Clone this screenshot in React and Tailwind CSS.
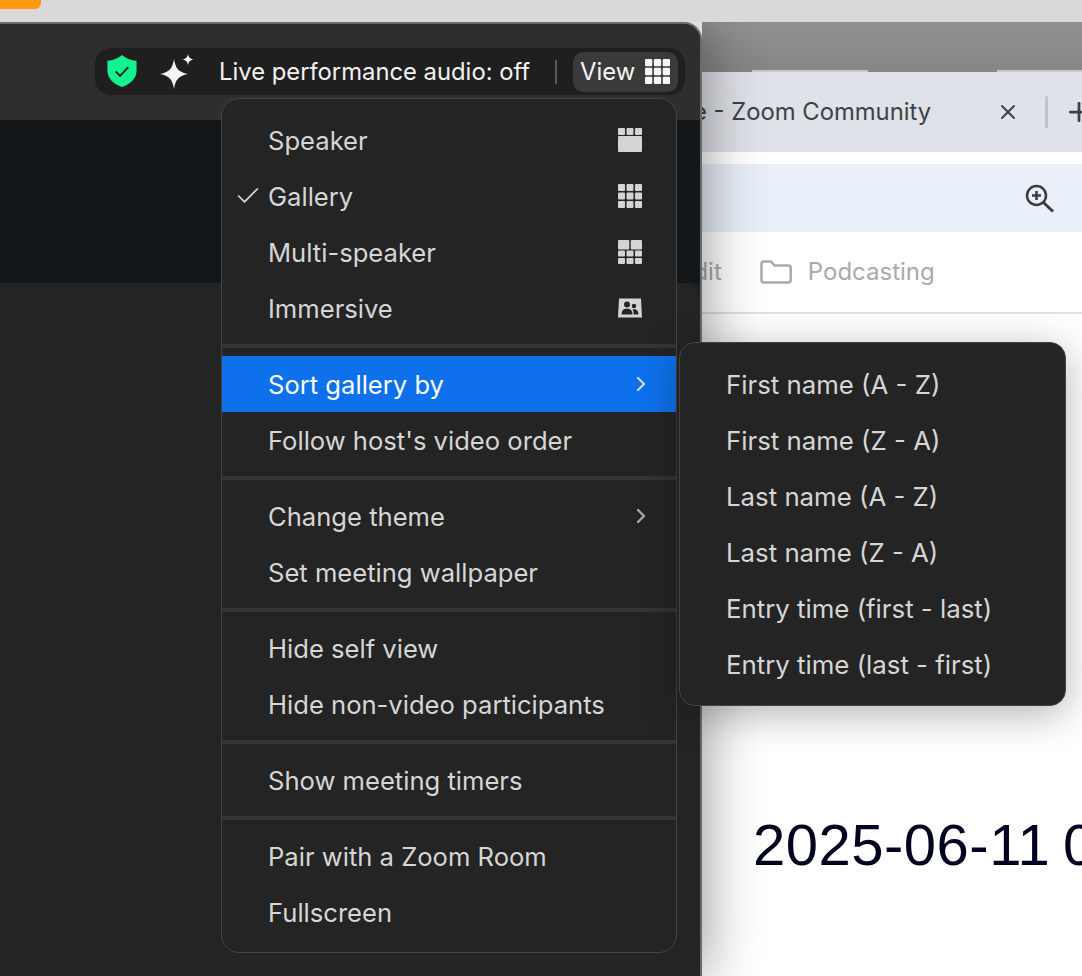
import { Check, ChevronRight, X, Plus } from 'lucide-react';

const GROUPS = [
  [
    { label: 'Speaker', icon: 'speaker' },
    { label: 'Gallery', icon: 'gallery', checked: true },
    { label: 'Multi-speaker', icon: 'multi' },
    { label: 'Immersive', icon: 'immersive' },
  ],
  [
    { label: 'Sort gallery by', more: true, active: true },
    { label: "Follow host's video order" },
  ],
  [{ label: 'Change theme', more: true }, { label: 'Set meeting wallpaper' }],
  [{ label: 'Hide self view' }, { label: 'Hide non-video participants' }],
  [{ label: 'Show meeting timers' }],
  [{ label: 'Pair with a Zoom Room' }, { label: 'Fullscreen' }],
];

const SORT_OPTIONS = [
  'First name (A - Z)',
  'First name (Z - A)',
  'Last name (A - Z)',
  'Last name (Z - A)',
  'Entry time (first - last)',
  'Entry time (last - first)',
];

function GridIcon({ className = 'w-[24px] h-[24px]', fill = '#d4d4d4' }) {
  const cells = [0, 8.5, 17];
  return (
    <svg viewBox="0 0 24 24" className={className}>
      {cells.map((y) =>
        cells.map((x) => <rect key={`${x}-${y}`} x={x} y={y} width="7" height="7" rx="1" fill={fill} />)
      )}
    </svg>
  );
}

function SpeakerIcon() {
  return (
    <svg viewBox="0 0 24 24" className="w-[24px] h-[24px]">
      <rect x="0" y="0" width="7" height="7" rx="1" fill="#d4d4d4" />
      <rect x="8.5" y="0" width="7" height="7" rx="1" fill="#d4d4d4" />
      <rect x="17" y="0" width="7" height="7" rx="1" fill="#d4d4d4" />
      <rect x="0" y="8" width="24" height="16" rx="1" fill="#d4d4d4" />
    </svg>
  );
}

function MultiIcon() {
  return (
    <svg viewBox="0 0 24 24" className="w-[24px] h-[24px]">
      <rect x="0" y="0" width="11.3" height="9.5" rx="1" fill="#d4d4d4" />
      <rect x="12.7" y="0" width="11.3" height="9.5" rx="1" fill="#d4d4d4" />
      {[0, 8.5, 17].map((x) => (
        <rect key={x} x={x} y="10.5" width="7" height="6" rx="1" fill="#d4d4d4" />
      ))}
      {[0, 8.5, 17].map((x) => (
        <rect key={x} x={x} y="18" width="7" height="6" rx="1" fill="#d4d4d4" />
      ))}
    </svg>
  );
}

function ImmersiveIcon() {
  return (
    <svg viewBox="0 0 24 20" className="w-[24px] h-[20px]">
      <path d="M1 0.5 L23 0.5 L24 19.5 L0 19.5 Z" fill="#d4d4d4" />
      <circle cx="9" cy="6.5" r="3" fill="#242424" />
      <circle cx="16" cy="8" r="2.2" fill="#242424" />
      <path d="M3.5 16.5 C3.5 12 6 10.8 9 10.8 C12 10.8 14.5 12 14.5 16.5 Z" fill="#242424" />
      <path d="M15.6 16.5 C15.6 14 15.3 12.6 14.6 11.6 C17.6 10.6 20.5 12 20.5 16.5 Z" fill="#242424" />
    </svg>
  );
}

const ICONS = {
  speaker: <SpeakerIcon />,
  gallery: <GridIcon />,
  multi: <MultiIcon />,
  immersive: <ImmersiveIcon />,
};

function MenuRow({ item }) {
  return (
    <div
      className={`relative flex items-center h-[56px] pl-[46px] pr-[34px] justify-between ${
        item.active ? 'bg-[#0e71eb] text-white' : 'text-[#d6d6d6]'
      }`}
    >
      {item.checked && (
        <Check size={28} strokeWidth={1.5} className="absolute left-[12px] top-[14px] text-[#d6d6d6]" />
      )}
      <span className="pt-[2px]">{item.label}</span>
      {item.icon && ICONS[item.icon]}
      {item.more && (
        <ChevronRight
          size={24}
          strokeWidth={2.4}
          className={`-mr-[11px] ${item.active ? 'text-[#c9d6ee]' : 'text-[#a8a8a8]'}`}
        />
      )}
    </div>
  );
}

function ViewMenu() {
  return (
    <div className="absolute left-[221px] top-[98px] z-30 w-[456px] h-[855px] py-[13px] rounded-[18px] bg-[#242424] border border-[#444444] text-[25.6px] leading-none">
      {GROUPS.map((group, i) => (
        <div key={i}>
          {i > 0 && <div className="h-[4px] my-[8px] bg-[#343434]" />}
          {group.map((item) => (
            <MenuRow key={item.label} item={item} />
          ))}
        </div>
      ))}
    </div>
  );
}

function SortMenu() {
  return (
    <div className="absolute left-[679px] top-[342px] z-40 w-[387px] h-[364px] py-[14px] rounded-[16px] bg-[#242424] border border-[#444444] text-[25.8px] leading-none shadow-[0_8px_40px_rgba(0,0,0,0.3)]">
      {SORT_OPTIONS.map((option) => (
        <div key={option} className="flex items-center h-[56px] pl-[46px] text-[#d6d6d6]">
          {option}
        </div>
      ))}
    </div>
  );
}

function StatusPill() {
  return (
    <div className="flex items-center h-[47px] w-[590px] rounded-[16px] bg-[#1f1f1f] pl-[12px] pr-[7px]">
      <svg viewBox="0 0 30 34" className="w-[30px] h-[33px] shrink-0">
        <path d="M15 0 C19 3.5 24 5.5 30 6 L30 16 C30 24 24 30 15 33 C6 30 0 24 0 16 L0 6 C6 5.5 11 3.5 15 0 Z" fill="#12f28f" />
        <path d="M8.5 17 L13 21.5 L21.5 12.5" fill="none" stroke="#1d2a26" strokeWidth="2" />
      </svg>
      <svg viewBox="0 0 36 36" className="w-[36px] h-[36px] ml-[23px] shrink-0">
        <path d="M14 5 C15.5 14 18 18 28 20 C18 22 15.500 26 14 35 C12.500 26 10 22 0 20 C10 18 12.500 14 14 5 Z" fill="#f5f5f5" />
        <path d="M28 0 C28.800 3.500 30 4.700 33.500 5.500 C30 6.300 28.800 7.500 28 11 C27.200 7.500 26 6.300 22.500 5.500 C26 4.700 27.200 3.500 28 0 Z" fill="#f5f5f5" />
      </svg>
      <span className="ml-[23px] text-[23.8px] leading-none text-[#f2f2f2] whitespace-nowrap">Live performance audio: off</span>
      <div className="ml-auto w-[2px] h-[24px] bg-[#5a5a5a]" />
      <div className="ml-[16px] flex items-center h-[40px] w-[105px] rounded-[10px] bg-[#3a3a3a] pl-[7px] pr-[8px] justify-between text-[23.8px] leading-none text-[#f5f5f5]">
        <span>View</span>
        <GridIcon className="w-[25px] h-[25px]" fill="#f5f5f5" />
      </div>
    </div>
  );
}

function ZoomWindow() {
  return (
    <div className="relative z-10 w-[702px] h-[954px] flex flex-col rounded-tr-[18px] overflow-hidden bg-[#242424] border-r-2 border-t-2 border-[#6a6a6a] shadow-[0_0_60px_rgba(0,0,0,0.45)]">
      <div className="h-[96px] shrink-0 bg-[#2e2e2e] flex justify-end items-start pt-[24px] pr-[15px]">
        <StatusPill />
      </div>
      <div className="h-[163px] shrink-0 bg-[#14171a]" />
      <div className="flex-1 bg-[#1f1f1f]">
        <div className="h-full rounded-tr-[18px] bg-[#242424]" />
      </div>
    </div>
  );
}

function BrowserWindow() {
  return (
    <div className="flex-1 min-w-0 h-[954px] flex flex-col overflow-hidden bg-white [font-family:Inter,sans-serif]">
      <div className="relative h-[50px] shrink-0 bg-gradient-to-b from-[#919191] to-[#858585]">
        <div className="absolute left-[50px] bottom-0 w-[116px] h-[2px] bg-[#c8c8c8]" />
        <div className="absolute left-[295px] bottom-0 w-[90px] h-[2px] bg-[#c8c8c8]" />
      </div>
      <div className="relative h-[80px] shrink-0 bg-[#dfe2e8] flex items-center text-[23.8px] text-[#3e4145] whitespace-nowrap">
        <span className="-ml-[9px]">e - Zoom Community</span>
        <X size={24} strokeWidth={2} className="ml-[65px] shrink-0 text-[#3e4145]" />
        <div className="ml-[25px] w-[3px] h-[32px] shrink-0 rounded bg-[#bfc2c6]" />
        <Plus size={30} strokeWidth={2.2} className="ml-[16px] shrink-0 text-[#3e4145]" />
      </div>
      <div className="h-[12px] shrink-0 bg-white" />
      <div className="h-[68px] shrink-0 bg-[#e9eff8] flex items-center justify-end pr-[27px]">
        <svg viewBox="0 0 30 30" className="w-[30px] h-[30px] mt-[1px]" fill="none" stroke="#3a3c40">
          <circle cx="11.500" cy="11.500" r="9.500" strokeWidth="2.500" />
          <path d="M18.500 18.500 L28 27.500" strokeWidth="3" />
          <path d="M7 11.500 H16 M11.500 7 V16" strokeWidth="2.500" />
        </svg>
      </div>
      <div className="h-[82px] shrink-0 bg-white border-b-2 border-[#e2e2e2] flex items-center text-[24px] text-[#aaaaaa] whitespace-nowrap">
        <span className="-ml-[23px]">Edit</span>
        <svg viewBox="0 0 32 24" className="w-[32px] h-[24px] ml-[38px] shrink-0" fill="none" stroke="#aaaaaa" strokeWidth="2.500">
          <path d="M1.500 4 Q1.500 1.500 4 1.500 L11 1.500 L14.500 5.500 L28 5.500 Q30.700 5.500 30.700 8 L30.700 20 Q30.700 22.500 28 22.500 L4 22.500 Q1.500 22.500 1.500 20 Z" />
        </svg>
        <span className="ml-[16px]">Podcasting</span>
      </div>
      <div className="pt-[502px] pl-[51px] whitespace-nowrap text-[58px] leading-none tracking-[0.5px] [word-spacing:-4px] text-[#01021f] [font-family:'Liberation_Sans',sans-serif]">
        2025-06-11 08:00
      </div>
    </div>
  );
}

export default function App() {
  return (
    <div className="relative w-[1082px] h-[976px] overflow-hidden bg-white [font-family:Inter,sans-serif]">
      <div className="relative z-20 h-[22px] bg-[#d9d9d9]">
        <div className="w-[41px] h-[9px] rounded-br-[6px] bg-[#ff9a0a]" />
      </div>
      <div className="flex">
        <ZoomWindow />
        <BrowserWindow />
      </div>
      <ViewMenu />
      <SortMenu />
    </div>
  );
}
